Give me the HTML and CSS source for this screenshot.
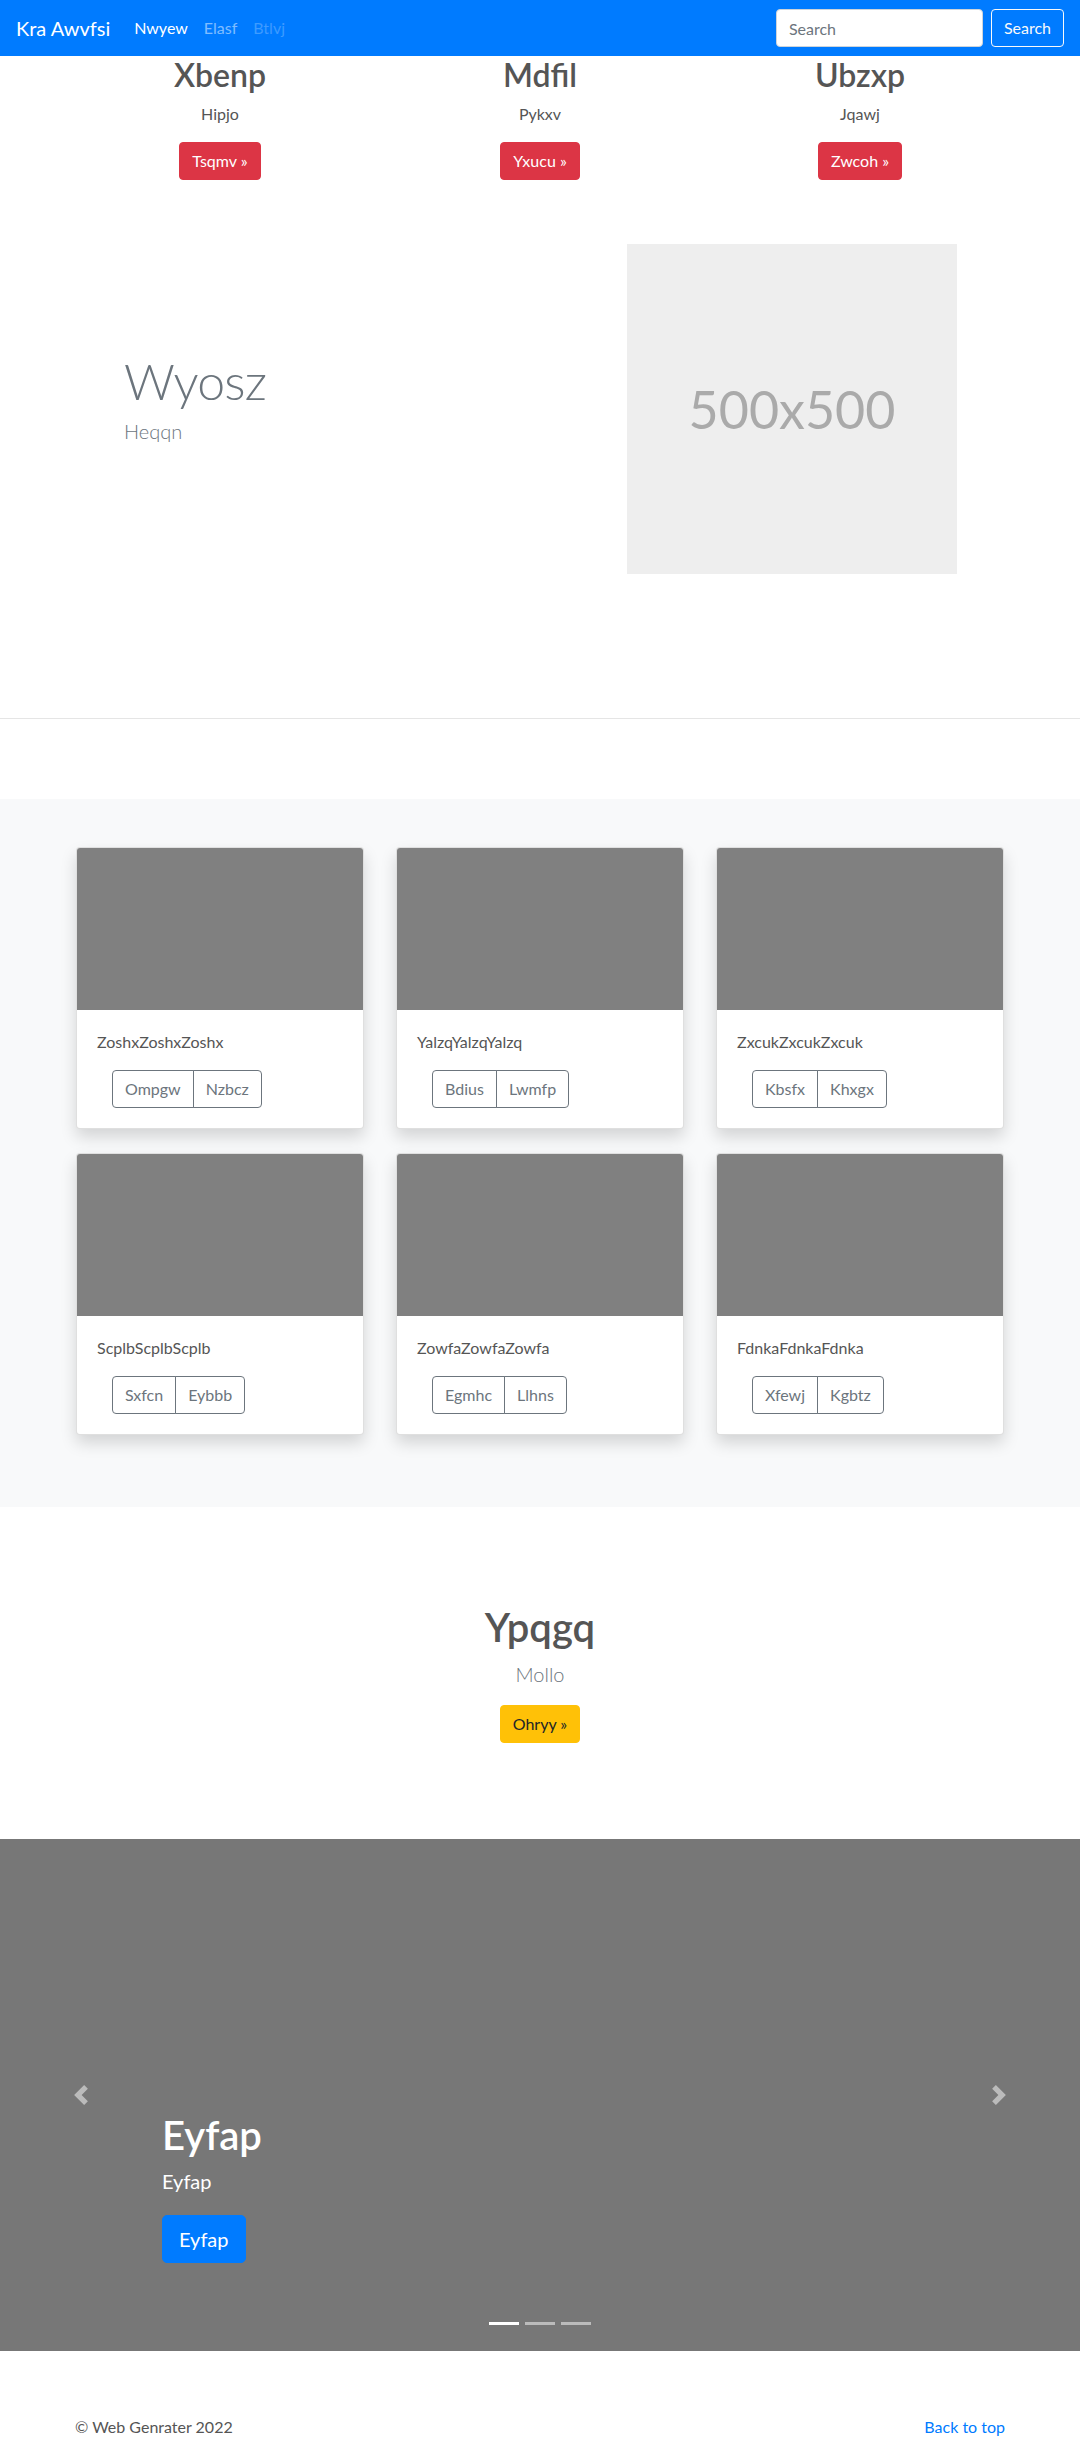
FILE: index.html
```html
<!DOCTYPE html>
<html lang="en">
<head>
<meta charset="utf-8">
<title>Kra Awvfsi</title>
<link rel="stylesheet" href="styles.css">
</head>
<body>
<header class="navbar">
  <a class="brand" href="#">Kra Awvfsi</a>
  <nav class="nav">
    <a class="nav-link active" href="#">Nwyew</a>
    <a class="nav-link" href="#">Elasf</a>
    <a class="nav-link disabled" href="#">Btlvj</a>
  </nav>
  <form class="search">
    <input class="search-input" type="text" placeholder="Search">
    <button class="btn btn-outline-light" type="button">Search</button>
  </form>
</header>

<main>
  <section class="container marketing">
    <div class="marketing-col">
      <h2>Xbenp</h2>
      <p>Hipjo</p>
      <p><a class="btn btn-danger" href="#">Tsqmv &raquo;</a></p>
    </div>
    <div class="marketing-col">
      <h2>Mdfil</h2>
      <p>Pykxv</p>
      <p><a class="btn btn-danger" href="#">Yxucu &raquo;</a></p>
    </div>
    <div class="marketing-col">
      <h2>Ubzxp</h2>
      <p>Jqawj</p>
      <p><a class="btn btn-danger" href="#">Zwcoh &raquo;</a></p>
    </div>
  </section>

  <section class="container featurette">
    <div class="featurette-text">
      <h2 class="featurette-heading">Wyosz</h2>
      <p class="lead">Heqqn</p>
    </div>
    <div class="featurette-media">
      <div class="placeholder-img">500x500</div>
    </div>
  </section>

  <hr class="divider">

  <section class="album">
    <div class="container card-grid">
      <div class="card-col">
        <div class="card">
          <div class="card-img"></div>
          <div class="card-body">
            <p class="card-text">ZoshxZoshxZoshx</p>
            <div class="btn-group"><a class="btn btn-outline-secondary" href="#">Ompgw</a><a class="btn btn-outline-secondary" href="#">Nzbcz</a></div>
          </div>
        </div>
      </div>
      <div class="card-col">
        <div class="card">
          <div class="card-img"></div>
          <div class="card-body">
            <p class="card-text">YalzqYalzqYalzq</p>
            <div class="btn-group"><a class="btn btn-outline-secondary" href="#">Bdius</a><a class="btn btn-outline-secondary" href="#">Lwmfp</a></div>
          </div>
        </div>
      </div>
      <div class="card-col">
        <div class="card">
          <div class="card-img"></div>
          <div class="card-body">
            <p class="card-text">ZxcukZxcukZxcuk</p>
            <div class="btn-group"><a class="btn btn-outline-secondary" href="#">Kbsfx</a><a class="btn btn-outline-secondary" href="#">Khxgx</a></div>
          </div>
        </div>
      </div>
      <div class="card-col">
        <div class="card">
          <div class="card-img"></div>
          <div class="card-body">
            <p class="card-text">ScplbScplbScplb</p>
            <div class="btn-group"><a class="btn btn-outline-secondary" href="#">Sxfcn</a><a class="btn btn-outline-secondary" href="#">Eybbb</a></div>
          </div>
        </div>
      </div>
      <div class="card-col">
        <div class="card">
          <div class="card-img"></div>
          <div class="card-body">
            <p class="card-text">ZowfaZowfaZowfa</p>
            <div class="btn-group"><a class="btn btn-outline-secondary" href="#">Egmhc</a><a class="btn btn-outline-secondary" href="#">Llhns</a></div>
          </div>
        </div>
      </div>
      <div class="card-col">
        <div class="card">
          <div class="card-img"></div>
          <div class="card-body">
            <p class="card-text">FdnkaFdnkaFdnka</p>
            <div class="btn-group"><a class="btn btn-outline-secondary" href="#">Xfewj</a><a class="btn btn-outline-secondary" href="#">Kgbtz</a></div>
          </div>
        </div>
      </div>
    </div>
  </section>

  <section class="jumbo">
    <h1 class="jumbo-heading">Ypqgq</h1>
    <p class="lead muted">Mollo</p>
    <p><a class="btn btn-warning" href="#">Ohryy &raquo;</a></p>
  </section>

  <div class="carousel">
    <ol class="carousel-indicators">
      <li class="active"></li>
      <li></li>
      <li></li>
    </ol>
    <div class="carousel-caption">
      <h1>Eyfap</h1>
      <p>Eyfap</p>
      <p><a class="btn btn-lg btn-primary" href="#">Eyfap</a></p>
    </div>
    <a class="carousel-control prev" href="#">
      <svg class="control-icon" viewBox="0 0 8 8" width="20" height="20"><path fill="#fff" d="M5.25 0l-4 4 4 4 1.5-1.5-2.5-2.5 2.5-2.5-1.5-1.5z"/></svg>
    </a>
    <a class="carousel-control next" href="#">
      <svg class="control-icon" viewBox="0 0 8 8" width="20" height="20"><path fill="#fff" d="M2.75 0l-1.5 1.5 2.5 2.5-2.5 2.5 1.5 1.5 4-4-4-4z"/></svg>
    </a>
  </div>
</main>

<footer class="container footer">
  <p>&copy; Web Genrater 2022</p>
  <p><a href="#">Back to top</a></p>
</footer>
</body>
</html>
```

FILE: styles.css
```css
* {
  box-sizing: border-box;
}

html,
body {
  margin: 0;
}

body {
  font-family: Lato, "Segoe UI", "Noto Sans", sans-serif;
  font-size: 16px;
  line-height: 1.5;
  color: #555;
  background: #fff;
}

a {
  text-decoration: none;
  color: #007bff;
}

p {
  margin: 0 0 16px;
}

h1,
h2 {
  margin: 0 0 8px;
  line-height: 1.2;
  font-weight: 600;
}

.container {
  width: 960px;
  margin: 0 auto;
}

/* Navbar */
.navbar {
  display: flex;
  align-items: center;
  height: 56px;
  padding: 8px 16px;
  background: #007bff;
}

.brand {
  font-size: 20px;
  line-height: 30px;
  padding: 5px 0;
  margin-right: 16px;
  color: #fff;
}

.nav {
  display: flex;
}

.nav-link {
  padding: 8px;
  line-height: 24px;
  color: rgba(255, 255, 255, .5);
}

.nav-link.active {
  color: #fff;
}

.nav-link.disabled {
  color: rgba(255, 255, 255, .25);
}

.search {
  display: flex;
  gap: 8px;
  margin-left: auto;
}

.search-input {
  width: 207px;
  height: 38px;
  padding: 6px 12px;
  font: inherit;
  color: #495057;
  background: #fff;
  border: 1px solid #ced4da;
  border-radius: 4px;
}

.search-input::placeholder {
  color: #6c757d;
}

/* Buttons */
.btn {
  display: inline-block;
  font-family: inherit;
  font-size: 16px;
  line-height: 24px;
  padding: 6px 12px;
  border: 1px solid transparent;
  border-radius: 4px;
  text-align: center;
  cursor: pointer;
}

.btn-outline-light {
  color: #f8f9fa;
  border-color: #f8f9fa;
  background: transparent;
}

.btn-danger {
  color: #fff;
  background: #dc3545;
  border-color: #dc3545;
}

.btn-warning {
  color: #212529;
  background: #ffc107;
  border-color: #ffc107;
}

.btn-primary {
  color: #fff;
  background: #007bff;
  border-color: #007bff;
}

.btn-lg {
  font-size: 20px;
  line-height: 30px;
  padding: 8px 16px;
  border-radius: 5px;
}

.btn-outline-secondary {
  color: #6c757d;
  border-color: #6c757d;
  background: transparent;
}

.btn-group {
  display: inline-flex;
  margin-left: 15px;
}

.btn-group .btn:first-child {
  border-radius: 4px 0 0 4px;
}

.btn-group .btn + .btn {
  margin-left: -1px;
  border-radius: 0 4px 4px 0;
}

/* Marketing columns */
.marketing {
  display: grid;
  grid-template-columns: repeat(3, 1fr);
  text-align: center;
}

.marketing-col {
  margin-bottom: 24px;
}

.marketing h2 {
  font-size: 32px;
  font-weight: 600;
}

/* Featurette */
.featurette {
  display: grid;
  grid-template-columns: 480px 480px;
  padding-top: 24px;
  padding-bottom: 144px;
}

.featurette-text {
  padding-left: 64px;
  margin-top: 112px;
}

.featurette-heading {
  font-size: 50px;
  font-weight: 300;
  line-height: 1;
  letter-spacing: -0.8px;
  color: #6c757d;
  margin-bottom: 10px;
}

.lead {
  font-size: 20px;
  font-weight: 300;
}

.featurette .lead {
  color: #6c757d;
}

.featurette-media {
  padding-left: 87px;
}

.placeholder-img {
  width: 330px;
  height: 330px;
  display: flex;
  align-items: center;
  justify-content: center;
  background: #eee;
  color: #aaa;
  font-size: 52px;
  line-height: 1;
}

.divider {
  margin: 0;
  border: 0;
  border-top: 1px solid #e5e5e5;
}

/* Album */
.album {
  margin-top: 80px;
  padding: 48px 0;
  background: #f8f9fa;
}

.card-grid {
  display: grid;
  grid-template-columns: repeat(3, 1fr);
}

.card-col {
  padding: 0 16px;
  margin-bottom: 24px;
}

.card {
  background: #fff;
  border: 1px solid rgba(0, 0, 0, .125);
  border-radius: 4px;
  overflow: hidden;
  box-shadow: 0 8px 16px rgba(0, 0, 0, .15);
}

.card-img {
  height: 162px;
  background: #808080;
}

.card-body {
  padding: 20px;
}

.card-text {
  margin-bottom: 16px;
}

/* Jumbo */
.jumbo {
  text-align: center;
  padding: 96px 0 80px;
}

.jumbo-heading {
  font-size: 40px;
}

.muted {
  color: #6c757d;
}

/* Carousel */
.carousel {
  position: relative;
  height: 512px;
  background: #777;
  margin-bottom: 64px;
}

.carousel-indicators {
  position: absolute;
  left: 0;
  right: 0;
  bottom: 0;
  display: flex;
  justify-content: center;
  margin: 0 0 16px;
  padding: 0;
  list-style: none;
}

.carousel-indicators li {
  width: 30px;
  height: 23px;
  margin: 0 3px;
  border-top: 10px solid transparent;
  border-bottom: 10px solid transparent;
  background: #fff;
  background-clip: padding-box;
  opacity: .5;
}

.carousel-indicators li.active {
  opacity: 1;
}

.carousel-caption {
  position: absolute;
  left: 15%;
  right: 15%;
  bottom: 48px;
  padding: 20px 0;
  color: #fff;
  text-align: left;
}

.carousel-caption h1 {
  font-size: 40px;
}

.carousel-caption p {
  font-size: 20px;
  line-height: 1.4;
  margin-bottom: 20px;
}

.carousel-control {
  position: absolute;
  top: 0;
  bottom: 0;
  width: 15%;
  display: flex;
  align-items: center;
  justify-content: center;
  opacity: .5;
}

.carousel-control.prev {
  left: 0;
}

.carousel-control.next {
  right: 0;
}

/* Footer */
.footer {
  display: flex;
  justify-content: space-between;
  padding: 0 15px;
}
```
